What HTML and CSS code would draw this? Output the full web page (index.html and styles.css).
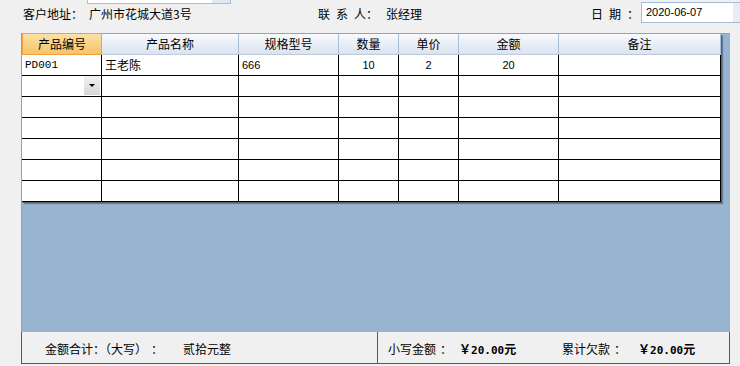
FILE: index.html
```html
<!DOCTYPE html>
<html lang="zh-CN">
<head>
    <meta charset="UTF-8">
    <title>销售单</title>
    <link rel="stylesheet" href="styles.css">
</head>
<body>
    <div class="info">
        <span class="lbl lbl-addr">客户地址：</span>
        <div class="addr-val">
            <div class="combo-stub"></div>
            <span>广州市花城大道3号</span>
        </div>
        <span class="lbl lbl-contact"><span class="spaced">联系</span>人：</span>
        <span class="lbl contact-val">张经理</span>
        <span class="lbl lbl-date"><span class="spaced">日期</span>：</span>
        <div class="date-box">2020-06-07</div>
    </div>

    <div class="grid-panel">
        <div class="sheet">
            <div class="th th-active">产品编号</div>
            <div class="th">产品名称</div>
            <div class="th">规格型号</div>
            <div class="th">数量</div>
            <div class="th">单价</div>
            <div class="th">金额</div>
            <div class="th">备注</div>

            <div class="td code">PD001</div>
            <div class="td">王老陈</div>
            <div class="td num">666</div>
            <div class="td num center">10</div>
            <div class="td num center">2</div>
            <div class="td num center">20</div>
            <div class="td"></div>

            <div class="td drop-cell"><span class="drop-btn"></span></div>
            <div class="td"></div><div class="td"></div><div class="td"></div><div class="td"></div><div class="td"></div><div class="td"></div>

            <div class="td"></div><div class="td"></div><div class="td"></div><div class="td"></div><div class="td"></div><div class="td"></div><div class="td"></div>
            <div class="td"></div><div class="td"></div><div class="td"></div><div class="td"></div><div class="td"></div><div class="td"></div><div class="td"></div>
            <div class="td"></div><div class="td"></div><div class="td"></div><div class="td"></div><div class="td"></div><div class="td"></div><div class="td"></div>
            <div class="td"></div><div class="td"></div><div class="td"></div><div class="td"></div><div class="td"></div><div class="td"></div><div class="td"></div>
            <div class="td"></div><div class="td"></div><div class="td"></div><div class="td"></div><div class="td"></div><div class="td"></div><div class="td"></div>
        </div>
    </div>

    <div class="footer">
        <div class="panel panel-left">
            <span class="big-label">金额合计：（大写）<span class="colon">：</span></span>
            <span>贰拾元整</span>
        </div>
        <div class="panel panel-right">
            <span class="sum-label">小写金额<span class="colon">：</span></span>
            <b class="money sum-val">￥<span class="dig">20.00</span>元</b>
            <span class="sum-label2">累计欠款<span class="colon">：</span></span>
            <b class="money">￥<span class="dig">20.00</span>元</b>
        </div>
    </div>
</body>
</html>
```

FILE: styles.css
```css
html, body {
    overflow: hidden;
}
body {
    margin: 0;
    background: #f0f0f0;
    font-family: "Noto Sans CJK SC", sans-serif;
    font-size: 12px;
    color: #000;
}

/* top info row */
.info {
    display: flex;
    align-items: flex-start;
    height: 33px;
    white-space: nowrap;
}
.info > * {
    flex: none;
}
.lbl {
    line-height: 14px;
    margin-top: 7px;
}
.lbl-addr {
    margin-left: 23px;
    width: 66px;
}
.addr-val {
    display: flex;
    flex-direction: column;
    width: 229px;
    line-height: 14px;
}
.addr-val span {
    margin-top: 3px;
}
.combo-stub {
    margin-left: -2px;
    width: 142px;
    height: 3px;
    background: linear-gradient(to right, #fff 124px, #dfe8f3 124px);
    border: 1px solid #a9bed8;
    border-top: none;
}
.lbl-contact {
    width: 68px;
}
.spaced {
    letter-spacing: 6px;
}
.contact-val {
    width: 205px;
}
.lbl-date {
    width: 50px;
}
.date-box {
    margin-top: 2px;
    width: 110px;
    height: 21px;
    box-sizing: border-box;
    border: 1px solid #a5bcd8;
    background: linear-gradient(to right, #fff 91px, #e6edf6 91px);
    padding-left: 4px;
    line-height: 19px;
    font-family: "Liberation Sans", sans-serif;
    font-size: 11px;
}

/* grid */
.grid-panel {
    margin-left: 21px;
    width: 709px;
    height: 299px;
    box-sizing: border-box;
    border-top: 1px solid #a0a0a0;
    border-left: 1px solid #a0a0a0;
    background: #99b4d1;
}
.sheet {
    display: grid;
    grid-template-columns: 80px 137px 100px 60px 60px 100px 162px;
    grid-auto-rows: 21px;
    width: 699px;
    box-shadow: 1px 1px 0 #5e5e5e, 2px 2px 1px rgba(0, 0, 0, 0.3);
}
.th {
    box-sizing: border-box;
    border-right: 1px solid #a7bed8;
    border-bottom: 1px solid #bccbdd;
    background: linear-gradient(#f8fafd, #dae3ee);
    text-align: center;
    line-height: 20px;
}
.th:last-child {
    border-right-color: #6f7d8c;
}
.th-active {
    border: 1px solid #f0a040;
    margin-top: -1px;
    height: 22px;
    background: linear-gradient(#fbe1a6, #f5c466);
}
.td {
    box-sizing: border-box;
    border-right: 1px solid #000;
    border-bottom: 1px solid #000;
    background: #fff;
    padding-left: 3px;
    line-height: 20px;
}
.code {
    font-family: "Liberation Mono", monospace;
    font-size: 11px;
}
.num {
    font-family: "Liberation Sans", sans-serif;
    font-size: 11px;
}
.center {
    text-align: center;
    padding-left: 0;
}
.drop-cell {
    display: flex;
    justify-content: flex-end;
    align-items: flex-start;
    padding: 0 1px 0 0;
}
.drop-btn {
    display: flex;
    align-items: center;
    justify-content: center;
    width: 16px;
    height: 19px;
    background: linear-gradient(#f2f2f2, #d6d6d6);
}
.drop-btn::after {
    content: "";
    border-left: 3px solid transparent;
    border-right: 3px solid transparent;
    border-top: 3px solid #000;
}

/* footer */
.footer {
    display: flex;
    margin-left: 21px;
    white-space: nowrap;
}
.panel {
    display: flex;
    height: 32px;
    box-sizing: border-box;
    padding-top: 10px;
    line-height: 14px;
    border-left: 1px solid #5a5a5a;
    border-bottom: 1px solid #5a5a5a;
}
.panel > * {
    flex: none;
}
.panel-left {
    width: 356px;
    padding-left: 23px;
}
.big-label {
    width: 138px;
}
.colon {
    display: inline-block;
    width: 12px;
    margin-left: 4px;
    text-align: center;
}
.panel-right {
    width: 353px;
    padding-left: 10px;
    border-right: 1px solid #5a5a5a;
}
.sum-label {
    width: 71px;
}
.sum-val {
    width: 103px;
}
.sum-label2 {
    width: 76px;
}
.money {
    font-weight: bold;
}
.dig {
    font-family: "DejaVu Sans Mono", monospace;
    font-size: 11px;
}
```
